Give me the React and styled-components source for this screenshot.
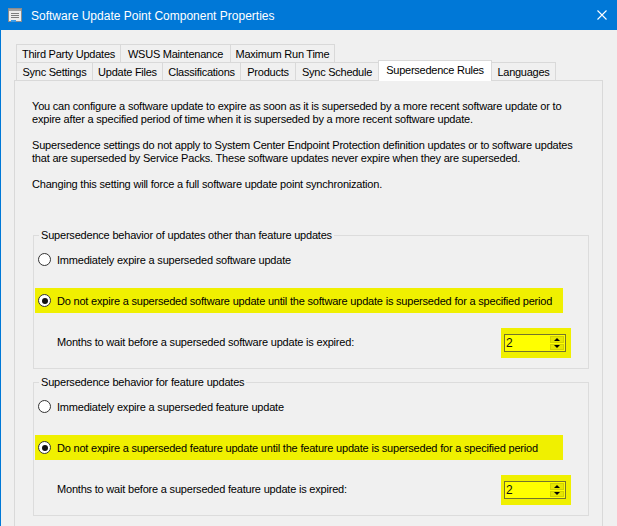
import styled, { createGlobalStyle } from 'styled-components'

const GlobalStyle = createGlobalStyle`
  html, body {
    margin: 0;
    padding: 0;
    background: #f0f0f0;
  }
  body {
    font-family: 'Liberation Sans', Arial, sans-serif;
    font-size: 11px;
    color: #000;
  }
`

const tabRows = [
  [
    { label: 'Third Party Updates', w: 105 },
    { label: 'WSUS Maintenance', w: 111 },
    { label: 'Maximum Run Time', w: 105 },
  ],
  [
    { label: 'Sync Settings', w: 77 },
    { label: 'Update Files', w: 71 },
    { label: 'Classifications', w: 79 },
    { label: 'Products', w: 56 },
    { label: 'Sync Schedule', w: 84 },
    { label: 'Supersedence Rules', w: 114, active: true },
    { label: 'Languages', w: 65 },
  ],
]

const groups = [
  {
    legend: 'Supersedence behavior of updates other than feature updates',
    first: 'Immediately expire a superseded software update',
    second: 'Do not expire a superseded software update until the software update is superseded for a specified period',
    months: 'Months to wait before a superseded software update is expired:',
  },
  {
    legend: 'Supersedence behavior for feature updates',
    first: 'Immediately expire a superseded feature update',
    second: 'Do not expire a superseded feature update until the feature update is superseded for a specified period',
    months: 'Months to wait before a superseded feature update is expired:',
  },
]

const App = () => {
  return (
    <>
      <GlobalStyle />
      <Window>
        <TitleBar>
          <svg width='14' height='15' viewBox='0 0 14 15'>
            <rect x='0.5' y='0.5' width='13' height='13' fill='#ececec' stroke='#8c8c8c' />
            <rect x='1' y='1' width='12' height='2' fill='#a0a0a0' />
            <line x1='3' y1='5.5' x2='11' y2='5.5' stroke='#7c7c7c' />
            <line x1='3' y1='7.5' x2='11' y2='7.5' stroke='#7c7c7c' />
            <line x1='3' y1='9.5' x2='11' y2='9.5' stroke='#7c7c7c' />
            <rect x='3' y='12' width='5' height='2' fill='#3a9be8' />
          </svg>
          <Title>Software Update Point Component Properties</Title>
          <Close>
            <svg width='10' height='10' viewBox='0 0 10 10'>
              <path d='M0.5 0.5 L9.5 9.5 M9.5 0.5 L0.5 9.5' stroke='#fff' strokeWidth='1.1' />
            </svg>
          </Close>
        </TitleBar>

        <Body>
          <TabStrip>
            {tabRows.map((row, i) => (
              <TabRow key={i}>
                {row.map(t => (
                  <Tab key={t.label} $w={t.w} $active={t.active}>{t.label}</Tab>
                ))}
              </TabRow>
            ))}
          </TabStrip>

          <Panel>
            <Para>
              You can configure a software update to expire as soon as it is superseded by a more recent software update or to{'\n'}
              expire after a specified period of time when it is superseded by a more recent software update.
            </Para>
            <Para>
              Supersedence settings do not apply to System Center Endpoint Protection definition updates or to software updates{'\n'}
              that are superseded by Service Packs. These software updates never expire when they are superseded.
            </Para>
            <Para>Changing this setting will force a full software update point synchronization.</Para>

            {groups.map(g => (
              <Group key={g.legend}>
                <Legend>{g.legend}</Legend>
                <RadioRow>
                  <Radio />
                  <span>{g.first}</span>
                </RadioRow>
                <RadioRow $highlight>
                  <Radio $checked />
                  <span>{g.second}</span>
                </RadioRow>
                <MonthsRow>
                  <MonthsLabel>{g.months}</MonthsLabel>
                  <SpinHighlight>
                    <SpinBox>
                      <SpinValue>2</SpinValue>
                      <SpinButtons>
                        <SpinButton><Arrow $up /></SpinButton>
                        <SpinButton><Arrow /></SpinButton>
                      </SpinButtons>
                    </SpinBox>
                  </SpinHighlight>
                </MonthsRow>
              </Group>
            ))}
          </Panel>
        </Body>
      </Window>
    </>
  )
}

export default App

const Window = styled.div`
  width: 617px;
  height: 526px;
  box-sizing: border-box;
  overflow: hidden;
  border-left: 1px solid #0078d7;
  background: #f0f0f0;
  display: flex;
  flex-direction: column;
`

const TitleBar = styled.div`
  height: 30px;
  flex-shrink: 0;
  background: #0078d7;
  color: #fff;
  display: flex;
  align-items: center;
  padding: 0 10px 0 7px;
  gap: 9px;
`

const Title = styled.div`
  flex: 1;
  font-size: 12px;
  padding-top: 1px;
`

const Close = styled.div`
  display: flex;
  align-items: center;
`

const Body = styled.div`
  flex: 1;
  display: flex;
  flex-direction: column;
  padding: 14px 0 0 13px;
`

const TabStrip = styled.div`
  margin-left: 2px;
  display: flex;
  flex-direction: column;
`

const TabRow = styled.div`
  display: flex;
  height: 18px;
  align-items: flex-end;
`

const Tab = styled.div`
  box-sizing: border-box;
  width: ${p => p.$w}px;
  height: ${p => (p.$active ? '21px' : '18px')};
  margin-right: -1px;
  margin-bottom: ${p => (p.$active ? '-1px' : '0')};
  position: relative;
  z-index: ${p => (p.$active ? 2 : 1)};
  border: 1px solid #d9d9d9;
  border-bottom: none;
  background: ${p => (p.$active ? '#fff' : '#f0f0f0')};
  display: flex;
  align-items: center;
  justify-content: center;
  white-space: nowrap;
  letter-spacing: -0.25px;
  padding-bottom: ${p => (p.$active ? '2px' : '0')};
`

const Panel = styled.div`
  width: 589px;
  flex: 1;
  box-sizing: border-box;
  border: 1px solid #d9d9d9;
  border-bottom: none;
  padding: 19px 0 0 17px;
`

const Para = styled.p`
  margin: 0 0 13px;
  line-height: 13px;
  white-space: pre-line;
  letter-spacing: -0.2px;

  &:last-of-type {
    margin-bottom: 38px;
  }
`

const Group = styled.fieldset`
  box-sizing: border-box;
  width: 556px;
  min-width: 0;
  margin: 0 0 7px 1px;
  padding: 0 0 10px;
  border: 1px solid #dcdcdc;
  display: flex;
  flex-direction: column;
  letter-spacing: -0.2px;
`

const Legend = styled.legend`
  margin-left: 5px;
  padding: 0 2px;
  line-height: 13px;
  height: 13px;
`

const RadioRow = styled.div`
  display: flex;
  align-items: center;
  gap: 6px;
  margin-left: 1px;
  padding-left: 3px;
  white-space: nowrap;
  height: ${p => (p.$highlight ? '25px' : '17px')};
  width: ${p => (p.$highlight ? '525px' : 'auto')};
  margin-top: ${p => (p.$highlight ? '20px' : '9px')};
  background: ${p => (p.$highlight ? '#f0f000' : 'transparent')};
`

const Radio = styled.span`
  box-sizing: border-box;
  width: 13px;
  height: 13px;
  flex-shrink: 0;
  border-radius: 50%;
  border: 1px solid #333;
  background: #fff;
  display: flex;
  align-items: center;
  justify-content: center;

  &::after {
    content: '';
    width: 6px;
    height: 6px;
    border-radius: 50%;
    background: #111;
    display: ${p => (p.$checked ? 'block' : 'none')};
  }
`

const MonthsRow = styled.div`
  display: flex;
  align-items: center;
  justify-content: space-between;
  margin-top: 15px;
  padding: 0 17px 0 23px;
  height: 30px;
`

const MonthsLabel = styled.span`
  margin-bottom: 2px;
  white-space: nowrap;
`

const SpinHighlight = styled.div`
  box-sizing: border-box;
  width: 70px;
  height: 30px;
  padding: 6px 5px 6px 3px;
  background: #f0f000;
`

const SpinBox = styled.div`
  box-sizing: border-box;
  height: 18px;
  border: 1px solid #74742c;
  background: #ffff00;
  display: flex;
  align-items: center;
  justify-content: space-between;
  padding-right: 1px;
`

const SpinValue = styled.span`
  font-size: 12px;
  padding-left: 1px;
  color: #111;
`

const SpinButtons = styled.div`
  display: flex;
  flex-direction: column;
  width: 14px;
  height: 14px;
  gap: 1px;
`

const SpinButton = styled.div`
  flex: 1;
  box-sizing: border-box;
  background: #e6e600;
  border: 1px solid #d2d200;
  display: flex;
  align-items: center;
  justify-content: center;
`

const Arrow = styled.span`
  width: 0;
  height: 0;
  border-left: 3px solid transparent;
  border-right: 3px solid transparent;
  ${p => (p.$up ? 'border-bottom: 3px solid #000;' : 'border-top: 3px solid #000;')}
`
